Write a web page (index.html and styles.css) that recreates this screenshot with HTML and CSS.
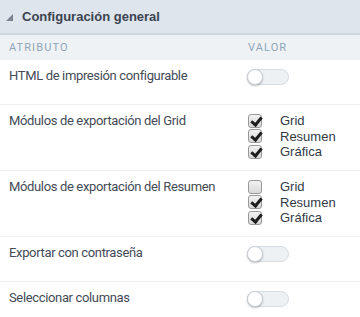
FILE: index.html
```html
<!DOCTYPE html>
<html lang="es">
<head>
<meta charset="utf-8">
<title>Configuración general</title>
<link rel="stylesheet" href="styles.css">
</head>
<body>
<div class="panel">
  <div class="panel-head">
    <span class="caret"></span>
    <span class="panel-title">Configuración general</span>
  </div>
  <div class="cols">
    <span class="col-attr">Atributo</span>
    <span class="col-val">Valor</span>
  </div>
  <div class="row row-toggle">
    <span class="attr">HTML de impresión configurable</span>
    <span class="toggle"><span class="knob"></span></span>
  </div>
  <div class="row row-checks">
    <span class="attr">Módulos de exportación del Grid</span>
    <ul class="checks">
      <li><span class="cb checked"></span>Grid</li>
      <li><span class="cb checked"></span>Resumen</li>
      <li><span class="cb checked"></span>Gráfica</li>
    </ul>
  </div>
  <div class="row row-checks">
    <span class="attr">Módulos de exportación del Resumen</span>
    <ul class="checks">
      <li><span class="cb"></span>Grid</li>
      <li><span class="cb checked"></span>Resumen</li>
      <li><span class="cb checked"></span>Gráfica</li>
    </ul>
  </div>
  <div class="row row-toggle">
    <span class="attr">Exportar con contraseña</span>
    <span class="toggle"><span class="knob"></span></span>
  </div>
  <div class="row row-toggle last">
    <span class="attr">Seleccionar columnas</span>
    <span class="toggle"><span class="knob"></span></span>
  </div>
</div>
</body>
</html>
```
FILE: styles.css
```css
* { box-sizing: border-box; }
html, body { margin: 0; padding: 0; background: #fff; }
body { font-family: "Liberation Sans", Arial, sans-serif; }

.panel { width: 360px; }

.panel-head {
  height: 35px;
  background: #dee5ec;
  border-bottom: 2px solid #cdd9df;
  display: flex;
  align-items: center;
  padding-left: 6px;
}
.caret {
  width: 0; height: 0;
  border-left: 7px solid transparent;
  border-bottom: 7px solid #7b8591;
  margin-right: 9px;
  margin-top: 1px;
}
.panel-title {
  font-size: 13px;
  font-weight: bold;
  color: #3b4350;
}

.cols {
  height: 25px;
  background: #eef2f5;
  display: grid;
  grid-template-columns: 239px 1fr;
  align-items: center;
  padding-left: 9px;
  font-family: Roboto, "Liberation Sans", sans-serif;
  font-size: 11px;
  letter-spacing: 1.1px;
  text-transform: uppercase;
  color: #8ea6b7;
}

.row {
  display: grid;
  grid-template-columns: 238px 1fr;
  align-items: start;
  padding: 8px 0 0 9px;
  border-bottom: 1px solid #edf0f4;
  font-size: 13px;
  color: #444b57;
}
.row-toggle { height: 45px; }
.row-checks { height: 66px; }
.row.last { border-bottom: none; }
.attr {
  font-family: Roboto, "Liberation Sans", sans-serif;
  font-size: 13px;
  letter-spacing: -0.35px;
  line-height: 16px;
}

.toggle {
  display: block;
  position: relative;
  width: 42px;
  height: 16px;
  margin-top: 1px;
  border-radius: 8px;
  background: #eef1f4;
  border: 1px solid #d6dde3;
}
.knob {
  position: absolute;
  left: -1px; top: -1px;
  width: 16px; height: 16px;
  border-radius: 50%;
  background: #fff;
  border: 1px solid #c9cfd5;
  box-shadow: 0 1px 2px rgba(0,0,0,0.25);
}

.checks { list-style: none; margin: 0; padding: 0; }
.checks li {
  display: flex;
  align-items: center;
  height: 15.6px;
  line-height: 15.6px;
  color: #333a46;
}
.cb {
  width: 14px; height: 14px;
  margin-left: 1px;
  margin-right: 18px;
  border: 1px solid #999;
  border-radius: 3px;
  background: linear-gradient(#f2f2f2, #d9d9d9);
  position: relative;
}
.cb.checked::after {
  content: "";
  position: absolute;
  left: 4px; top: 0px;
  width: 4px; height: 8px;
  border-right: 3px solid #1e1e1e;
  border-bottom: 3px solid #1e1e1e;
  transform: rotate(40deg);
}
```
